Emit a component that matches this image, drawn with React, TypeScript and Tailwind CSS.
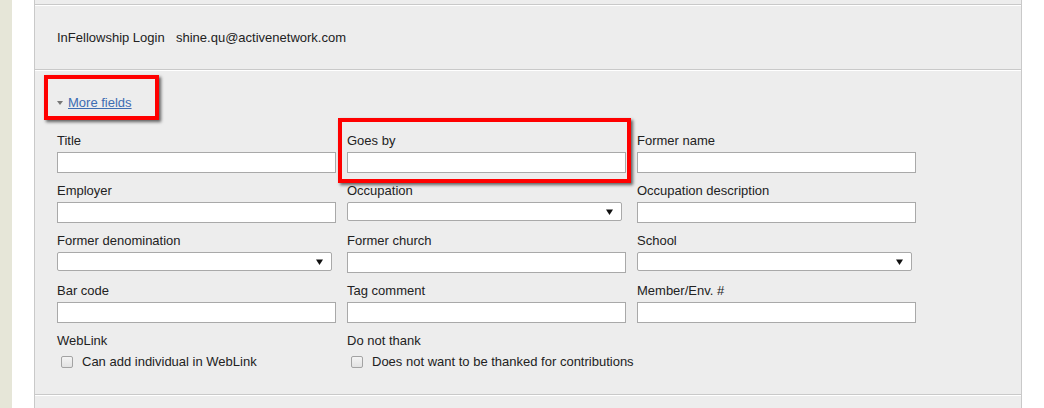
import React from "react";

type Kind = "input" | "select";

function Field({ label, kind = "input" }: { label: string; kind?: Kind }) {
  return (
    <div className="h-[50px]">
      <div className="h-[15px] leading-[15px] whitespace-nowrap">{label}</div>
      <div className="mt-[4px] h-[21px]">
        {kind === "select" ? (
          <div className="flex h-[19px] w-[275px] items-center justify-end rounded-[2px] border border-[#a9a9a9] bg-white pr-[8px]">
            <svg width="7" height="6" viewBox="0 0 7 6">
              <path d="M0 0.5 H7 L3.5 6 Z" fill="#111" />
            </svg>
          </div>
        ) : (
          <input
            type="text"
            className="block h-[21px] w-[279px] border border-[#a9a9a9] bg-white outline-none"
          />
        )}
      </div>
    </div>
  );
}

function CheckField({ label, text }: { label: string; text: string }) {
  return (
    <div>
      <div className="h-[15px] leading-[15px] whitespace-nowrap">{label}</div>
      <div className="mt-[6px] flex h-[15px] items-center">
        <div className="ml-[4px] h-[12px] w-[12px] shrink-0 rounded-[2px] border border-[#a3a3a3] bg-gradient-to-b from-[#f4f4f4] to-[#e2e2e2]" />
        <span className="ml-[9px] leading-[15px] whitespace-nowrap">{text}</span>
      </div>
    </div>
  );
}

function Sep() {
  return (
    <>
      <div className="h-px bg-[#c9c9c9]" />
      <div className="h-px bg-white" />
    </>
  );
}

export default function App() {
  return (
    <div className="relative flex h-[408px] w-[1044px] overflow-hidden bg-white font-['Liberation_Sans',Arial,sans-serif] text-[13px] text-[#222]">
      <div className="w-[12px] shrink-0 bg-[#e6e6d8]" />
      <div className="w-[22px] shrink-0 bg-white" />
      <div className="flex w-[988px] shrink-0 flex-col border-l border-r border-[#c9c9c9] bg-[#ededed]">
        <div className="h-[4px]" />
        <Sep />
        <div className="h-[63px] pl-[22px] pt-[24px]">
          <div className="flex leading-[15px]">
            <span className="w-[119px] whitespace-nowrap">InFellowship Login</span>
            <span>shine.qu@activenetwork.com</span>
          </div>
        </div>
        <Sep />
        <div className="h-[323px] pl-[22px] pt-[24px]">
          <div className="flex h-[15px] items-center leading-[15px]">
            <svg width="6" height="4" viewBox="0 0 6 4" className="mt-[1px]">
              <path d="M0 0 H6 L3 4 Z" fill="#777" />
            </svg>
            <span className="ml-[5px] text-[#3d6cb2] underline">More fields</span>
          </div>
          <div className="mt-[23px] grid grid-cols-[279px_279px_279px] gap-x-[11px]">
            <Field label="Title" />
            <Field label="Goes by" />
            <Field label="Former name" />
            <Field label="Employer" />
            <Field label="Occupation" kind="select" />
            <Field label="Occupation description" />
            <Field label="Former denomination" kind="select" />
            <Field label="Former church" />
            <Field label="School" kind="select" />
            <Field label="Bar code" />
            <Field label="Tag comment" />
            <Field label="Member/Env. #" />
            <CheckField label="WebLink" text="Can add individual in WebLink" />
            <CheckField label="Do not thank" text="Does not want to be thanked for contributions" />
            <div />
          </div>
        </div>
        <Sep />
        <div className="flex-1" />
      </div>
      <div className="flex-1 bg-white" />

      <div className="absolute left-[44px] top-[75px] h-[45px] w-[115px] border-[4px] border-[#ff0000] shadow-[2px_2px_3px_rgba(0,0,0,0.6)]" />
      <div className="absolute left-[338px] top-[118px] h-[65px] w-[293px] border-[4px] border-[#ff0000] shadow-[2px_2px_3px_rgba(0,0,0,0.6)]" />
    </div>
  );
}
